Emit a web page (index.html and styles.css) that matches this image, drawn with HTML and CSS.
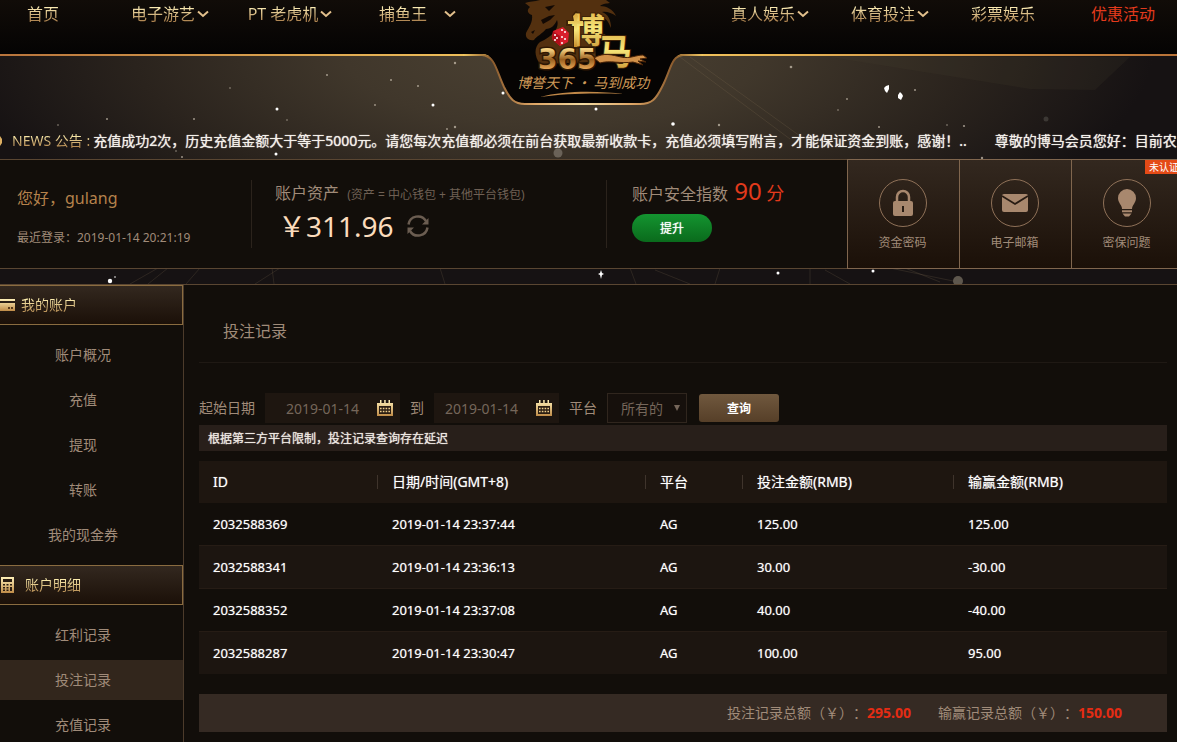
FILE: index.html
```
<!DOCTYPE html>
<html lang="zh-CN">
<head>
  <meta charset="UTF-8" />
  <meta name="viewport" content="width=device-width, initial-scale=1.0" />
  <title>博马365 - 投注记录</title>
  <link rel="stylesheet" href="styles.css">
</head>
<body>
  <div class="hero">
    <!-- 星空背景 -->
    <svg class="stars" width="1177" height="284" viewBox="0 0 1177 284" aria-hidden="true">
      <g stroke="#8a7658" stroke-opacity=".2">
        <path d="M680 57 L790 139 M690 57 L800 136 M130 284 L158 268 M148 284 L168 268 M186 284 L200 268 M255 284 L280 268 M274 284 L272 268 M445 284 L440 268 M636 284 L630 268 M655 270 L690 284 M715 284 L720 268 M810 284 V268 M825 270 L850 284 M890 268 L958 282 M905 268 L940 282" fill="none"/>
      </g>
      <path d="M830 57 H1130 L1095 90 L1030 89 Z" fill="#4a4234" opacity=".16"/>
      <g fill="#fff">
        <circle cx="277" cy="109" r="1.5"/><circle cx="433" cy="105" r="1.5"/><circle cx="276" cy="154" r="1.5"/>
        <circle cx="503" cy="93" r="1.5"/><circle cx="596" cy="109" r="1.5"/><circle cx="673" cy="124" r="1.8"/>
        <circle cx="110" cy="281" r="2.2"/><circle cx="115" cy="277" r=".8"/><circle cx="778" cy="273" r="1.5"/>
        <circle cx="873" cy="271" r="1.5"/>
        <path d="M884 88 l2 -2 3 -1 v4 l-2 4 -2 -2z M898 95 l2 -3 2 2 1 2 -2 4 -3 -2z M601 270 l1 3 2 1 -2 1 -1 4 -1 -4 -2 -1 2 -1z"/>
      </g>
      <g fill="#cfc4b4" opacity=".7">
        <circle cx="327" cy="75" r="1"/><circle cx="455" cy="63" r="1.2"/><circle cx="391" cy="80" r="1"/>
        <circle cx="418" cy="86" r="1"/><circle cx="230" cy="88" r=".8"/><circle cx="375" cy="105" r=".9"/>
        <circle cx="107" cy="119" r="1"/><circle cx="194" cy="119" r="1"/><circle cx="287" cy="120" r=".8"/>
        <circle cx="455" cy="127" r="1.2"/><circle cx="447" cy="129" r=".9"/><circle cx="182" cy="157" r="1"/>
        <circle cx="176" cy="151" r=".8"/><circle cx="58" cy="125" r=".8"/><circle cx="301" cy="133" r="1"/>
        <circle cx="791" cy="67" r="1.3"/><circle cx="719" cy="125" r="1.2"/><circle cx="847" cy="99" r=".9"/>
        <circle cx="838" cy="110" r=".8"/><circle cx="915" cy="90" r="1"/><circle cx="879" cy="127" r="1"/>
        <circle cx="947" cy="125" r=".8"/><circle cx="964" cy="126" r="1.1"/><circle cx="982" cy="158" r="1.2"/>
      </g>
      <circle cx="1046" cy="119" r="2.5" fill="#3c3834"/>
      <circle cx="558" cy="153" r="4.5" fill="#6a6258"/>
      <circle cx="958" cy="281" r="5" fill="#5e574d"/>
    </svg>

    <header class="header">
      <nav class="nav">
        <a class="nav-item" href="#"><span class="nav-text">首页</span></a>
        <a class="nav-item" href="#"><span class="nav-text">电子游艺</span><svg class="arrow" viewBox="0 0 12 8"><path d="M1 1.500 6 6l5-4.500"/></svg></a>
        <a class="nav-item" href="#"><span class="nav-text">PT 老虎机</span><svg class="arrow" viewBox="0 0 12 8"><path d="M1 1.500 6 6l5-4.500"/></svg></a>
        <a class="nav-item" href="#"><span class="nav-text">捕鱼王</span><svg class="arrow arrow-far" viewBox="0 0 12 8"><path d="M1 1.500 6 6l5-4.500"/></svg></a>
        <a class="logo" href="#" aria-label="博马365">
          <svg width="240" height="108" viewBox="463 0 240 108">
            <defs>
              <linearGradient id="gold" x1="0" y1="0" x2="0" y2="1">
                <stop offset="0" stop-color="#d9a53a"/>
                <stop offset=".5" stop-color="#f7e77a"/>
                <stop offset="1" stop-color="#c98d2c"/>
              </linearGradient>
              <linearGradient id="bronze" x1="0" y1="0" x2="0" y2="1">
                <stop offset=".2" stop-color="#f4d080"/>
                <stop offset=".5" stop-color="#9a6020"/>
                <stop offset=".8" stop-color="#e8a858"/>
              </linearGradient>
              <linearGradient id="rim" x1="0" y1="0" x2="1" y2="0">
                <stop offset="0" stop-color="#f2c862"/>
                <stop offset=".12" stop-color="#8a5a2c"/>
                <stop offset=".3" stop-color="#e0a868"/>
                <stop offset=".5" stop-color="#f2d9a0"/>
                <stop offset=".7" stop-color="#e0a868"/>
                <stop offset=".88" stop-color="#8a5a2c"/>
                <stop offset="1" stop-color="#f2c862"/>
              </linearGradient>
            </defs>
            <path d="M463 52 H703 V54 H683 C671 55 671 70 662 86 C656 99 652 103 640 103.500 H525 C513 103 509 98 504 86 C496 69 495 55 483 54 H463Z" fill="#060403"/>
            <path d="M463 55 H482 C495 56 496 70 504 87 C510 99 514 104 525 104 H640 C652 104 656 99 662 87 C671 70 671 56 683 55 H703" fill="none" stroke="url(#rim)" stroke-width="2"/>
            <!-- 马头 -->
            <path d="M540 0 C534 2 530 1 525 3 L530 7 C526 10 528 14 532 15 C533 22 529 27 526 33 C525 38 529 41 534 40 C537 36 542 34 546 29 C551 29 555 25 557 20 C560 28 552 37 540 42 C534 47 534 56 540 64 L596 62 L594 20 L604 18 C608 20 610 26 611 28 C611 20 608 14 602 12 C606 11 612 13 616 16 C613 9 606 6 600 6 C604 3 606 4 610 3 L606 0Z" fill="#53300f"/>
            <path d="M541 20 l8-4 6 -1 -5 5 -7 4z M545 7 l10 -2 -6 6z M531 32 l4 -2 -2 4z" fill="#120904"/>
            <path d="M576 12 l3 4 -1 5 h7 v4 h-7 V48 h-4 V25 h-7 v-4 h7 l-1 -5z" fill="#3d2208" stroke="#3d2208" stroke-width="2"/>
            <text x="571" y="43" class="logo-bo">博</text>
            <path d="M576 13 l2 3 -1 5 h6 v3 h-6 V47 h-3 V24 h-6 v-3 h6 l-1 -5z" fill="url(#gold)"/>
            <text x="598" y="64" class="logo-ma">马</text>
            <text x="538" y="69" class="logo-num">365</text>
            <path d="M594 58 C604 52 612 55 621 57 C630 59 636 55 643 55 L647 58 L640 59 L646 62 L638 61 L643 65 L633 62 C620 64 610 60 600 63z" fill="#d19149" stroke="#4b2407"/>
            <!-- 骰子 -->
            <path d="M553 31 L563 27 L569 33 L568 42 L560 46 L552 39Z" fill="#d81e2c"/>
            <path d="M553 31 L560 36 L560 46 L552 39Z" fill="#b00e1a"/>
            <g fill="#fff"><circle cx="562" cy="30" r="1"/><circle cx="565" cy="32" r="1"/><circle cx="562" cy="37" r="1"/><circle cx="565" cy="39" r="1"/><circle cx="562" cy="43" r="1"/><circle cx="555" cy="35" r="1"/><circle cx="557" cy="38" r="1"/><circle cx="555" cy="40" r="1"/></g>
            <text x="517" y="88" class="logo-slogan">博誉天下 · 马到成功</text>
            <path d="M540 97 C565 90 600 91 624 94 C600 93 565 93 540 97" fill="#c08848"/>
          </svg>
        </a>
        <a class="nav-item" href="#"><span class="nav-text">真人娱乐</span><svg class="arrow" viewBox="0 0 12 8"><path d="M1 1.500 6 6l5-4.500"/></svg></a>
        <a class="nav-item" href="#"><span class="nav-text">体育投注</span><svg class="arrow" viewBox="0 0 12 8"><path d="M1 1.500 6 6l5-4.500"/></svg></a>
        <a class="nav-item" href="#"><span class="nav-text">彩票娱乐</span></a>
        <a class="nav-item hot" href="#"><span class="nav-text">优惠活动</span></a>
      </nav>
    </header>

    <!-- 公告 -->
    <div class="news">
      <svg class="news-icon" width="16" height="14" viewBox="0 0 16 14"><path d="M0 4h5l6-4v14l-6-4H0z M12 2h2l2 3v4l-2 3h-2z" fill="#dcae62"/></svg>
      <span class="news-label">NEWS 公告 :</span>
      <div class="news-list">
        <span>充值成功2次，历史充值金额大于等于5000元。请您每次充值都必须在前台获取最新收款卡，充值必须填写附言，才能保证资金到账，感谢！..</span>
        <span>尊敬的博马会员您好：目前农</span>
      </div>
    </div>

    <!-- 账户信息 -->
    <section class="account">
      <div class="user">
        <div class="user-name">您好，gulang</div>
        <div class="user-login">最近登录：2019-01-14 20:21:19</div>
      </div>
      <div class="assets">
        <div class="info-title">账户资产 <small>(资产 = 中心钱包 + 其他平台钱包)</small></div>
        <div class="balance">
          <span>￥311.96</span>
          <button class="refresh" aria-label="刷新">
            <svg width="24" height="24" viewBox="0 0 24 24"><g fill="none" stroke="#6b5d51" stroke-width="2.500"><path d="M2.500 10.500A9.500 9.500 0 0 1 20 7"/><path d="M21.500 13.500A9.500 9.500 0 0 1 4 17"/></g><path d="M22.500 4v6.500H16z M1.500 20v-6.500H8z" fill="#6b5d51"/></svg>
          </button>
        </div>
      </div>
      <div class="security">
        <div class="info-title">账户安全指数 <span class="score"><b>90</b> 分</span></div>
        <button class="upgrade">提升</button>
      </div>
      <div class="tiles">
        <a class="tile" href="#">
          <span class="tile-icon"><svg width="22" height="28" viewBox="0 0 22 28"><path d="M5 12V8a6 6 0 0 1 12 0v4" fill="none" stroke="#a8886e" stroke-width="2.500"/><rect x="1" y="12" width="20" height="15" rx="2" fill="#a8886e"/><path d="M11 17v6" stroke="#281c13" stroke-width="2"/></svg></span>
          <span>资金密码</span>
        </a>
        <a class="tile" href="#">
          <span class="tile-icon"><svg width="26" height="20" viewBox="0 0 26 20"><rect y="1" width="26" height="18" rx="2" fill="#a8886e"/><path d="M0 3l13 8 13-8" fill="none" stroke="#281c13" stroke-width="1.800"/></svg></span>
          <span>电子邮箱</span>
        </a>
        <a class="tile" href="#">
          <span class="tile-icon"><svg width="20" height="28" viewBox="0 0 20 28"><path d="M10 0a9 9 0 0 0-9 9c0 5 4 7 4 11h10c0-4 4-6 4-11a9 9 0 0 0-9-9z M5 21.300h10v2H5z M5.500 24.500h9L12 27.500H8z" fill="#a8886e"/></svg></span>
          <span>密保问题</span>
          <span class="badge">未认证</span>
        </a>
      </div>
    </section>
  </div>

  <div class="page">
    <aside class="sidebar">
      <h3 class="side-title">
        <svg width="20" height="12" viewBox="0 0 20 12"><defs><linearGradient id="icon" x1="0" y1="0" x2="0" y2="1"><stop offset="0" stop-color="#fff0b8"/><stop offset="1" stop-color="#c08c48"/></linearGradient></defs><path d="M0 0h20v2H0z M0 4h20v8H0z" fill="url(#icon)"/><path d="M13 8h2v2h-2z M16 8h2v2h-2z" fill="#5a3b1a"/></svg>
        <span>我的账户</span>
      </h3>
      <ul class="side-menu">
        <li><a href="#">账户概况</a></li>
        <li><a href="#">充值</a></li>
        <li><a href="#">提现</a></li>
        <li><a href="#">转账</a></li>
        <li><a href="#">我的现金券</a></li>
      </ul>
      <h3 class="side-title side-detail">
        <svg width="14" height="16" viewBox="0 0 14 16"><path d="M1 0h13v16H1z" fill="url(#icon)"/><path d="M3 2h9v3H3z M3 7h2v1.500H3z M6.500 7h2v1.500h-2z M10 7h2v1.500h-2z M3 10h2v1.500H3z M6.500 10h2v1.500h-2z M10 10h2v4h-2z M3 12.500h2V14H3z M6.500 12.500h2V14h-2z" fill="#2a1d12"/></svg>
        <span>账户明细</span>
      </h3>
      <ul class="side-menu">
        <li><a href="#">红利记录</a></li>
        <li><a class="active" href="#">投注记录</a></li>
        <li><a href="#">充值记录</a></li>
      </ul>
    </aside>

    <main class="content">
      <h2 class="content-title">投注记录</h2>

      <form class="filter">
        <label for="startDate">起始日期</label>
        <div class="date date-start">
          <input type="text" id="startDate" value="2019-01-14">
          <svg width="18" height="16" viewBox="0 0 18 16"><path d="M1 3h16v13H1z M4 0h1.500v5H4z M8.200 0h1.500v5H8.200z M12.500 0H14v5h-1.500z" fill="url(#icon)"/><path d="M3 6h12v8H3z" fill="#2a1d12"/><path d="M4 8.500h10 M4 11.500h10" stroke="#f0cf8d" stroke-width="1.500" stroke-dasharray="1.600 1.200"/></svg>
        </div>
        <label for="endDate">到</label>
        <div class="date">
          <input type="text" id="endDate" value="2019-01-14">
          <svg width="18" height="16" viewBox="0 0 18 16"><path d="M1 3h16v13H1z M4 0h1.500v5H4z M8.200 0h1.500v5H8.200z M12.500 0H14v5h-1.500z" fill="url(#icon)"/><path d="M3 6h12v8H3z" fill="#2a1d12"/><path d="M4 8.500h10 M4 11.500h10" stroke="#f0cf8d" stroke-width="1.500" stroke-dasharray="1.600 1.200"/></svg>
        </div>
        <label for="platform">平台</label>
        <div class="select">
          <select id="platform"><option>所有的</option></select>
          <svg width="6" height="6" viewBox="0 0 6 6"><path d="M0 0h6L3 6z" fill="#75665a"/></svg>
        </div>
        <button class="search" type="button">查询</button>
      </form>

      <p class="notice">根据第三方平台限制，投注记录查询存在延迟</p>

      <table class="records">
        <colgroup>
          <col class="col-id"><col class="col-date"><col class="col-platform"><col class="col-bet"><col>
        </colgroup>
        <thead>
          <tr><th>ID</th><th>日期/时间(GMT+8)</th><th>平台</th><th>投注金额(RMB)</th><th>输赢金额(RMB)</th></tr>
        </thead>
        <tbody>
          <tr><td>2032588369</td><td>2019-01-14 23:37:44</td><td>AG</td><td>125.00</td><td>125.00</td></tr>
          <tr><td>2032588341</td><td>2019-01-14 23:36:13</td><td>AG</td><td>30.00</td><td>-30.00</td></tr>
          <tr><td>2032588352</td><td>2019-01-14 23:37:08</td><td>AG</td><td>40.00</td><td>-40.00</td></tr>
          <tr><td>2032588287</td><td>2019-01-14 23:30:47</td><td>AG</td><td>100.00</td><td>95.00</td></tr>
        </tbody>
      </table>

      <div class="total">
        <span>投注记录总额（￥）：<b>295.00</b></span>
        <span>输赢记录总额（￥）：<b>150.00</b></span>
      </div>
    </main>
  </div>
</body>
</html>
```

FILE: styles.css
```
* {
  box-sizing: border-box;
}

body {
  margin: 0;
  background-color: #120e0a;
  color: #a08b79;
  font-family: "Noto Sans", "Noto Sans CJK SC", sans-serif;
  font-size: 14px;
  line-height: 20px;
  text-spacing-trim: space-all;
  overflow: hidden;
}

a {
  color: inherit;
  text-decoration: none;
}

button, input, select {
  font-family: inherit;
  font-size: 14px;
}

button {
  border: none;
  padding: 0;
  cursor: pointer;
}

svg {
  display: block;
  flex: none;
}

.hero {
  position: relative;
  padding-bottom: 15px;
  border-bottom: 1px solid #5a4632;
  background: radial-gradient(ellipse 600px 220px at 47% 50px, #4c4233 0%, #40372b 35%, #2a231d 70%, #161213 100%);
  background-color: #161213;
}

.stars {
  position: absolute;
  top: 0;
  left: 0;
}

/* 顶部导航 */
.header {
  position: relative;
  height: 56px;
  background:
    linear-gradient(90deg, #b8743c, #f2c45c 42%, #f2c45c 58%, #b87238) bottom / 100% 2px no-repeat,
    linear-gradient(#110c08, #040303);
}

.nav {
  display: flex;
  margin: 0 -6px 0 -17px;
}

.nav-item {
  flex: 1;
  display: grid;
  grid-template-columns: 1fr auto 1fr;
  align-items: center;
  column-gap: 2px;
  height: 28px;
  font-size: 16px;
  line-height: 24px;
  white-space: nowrap;
}

.nav-text {
  grid-column: 2;
  background: linear-gradient(#fff0b8 20%, #a87b48 85%);
  background-clip: text;
  -webkit-background-clip: text;
  color: transparent;
}

.hot .nav-text {
  background: none;
  color: #e23a1c;
}

.arrow {
  width: 12px;
  height: 8px;
  fill: none;
  stroke: #e2c08c;
  stroke-width: 2;
}

.arrow-far {
  margin-left: 15px;
}

.logo {
  flex: 2;
  height: 56px;
  display: flex;
  justify-content: center;
}

.logo-bo, .logo-ma {
  font-family: "Noto Sans CJK SC", sans-serif;
  font-size: 34px;
  font-weight: bold;
  fill: url(#gold);
  stroke: #3d2208;
  stroke-width: 2px;
  paint-order: stroke;
}

.logo-num {
  font-family: "DejaVu Sans", sans-serif;
  font-size: 28px;
  font-weight: bold;
  fill: url(#bronze);
  stroke: #2f1803;
  stroke-width: 3px;
  paint-order: stroke;
}

.logo-slogan {
  font-family: "Noto Sans CJK SC", sans-serif;
  font-size: 14px;
  font-style: italic;
  fill: #cf9a58;
}

/* 公告 */
.news {
  position: relative;
  display: flex;
  align-items: center;
  height: 103px;
  padding-top: 67px;
  margin-left: -14px;
  overflow: hidden;
  white-space: nowrap;
}

.news-icon {
  margin-right: 10px;
}

.news-label {
  background: linear-gradient(#fff0b0 20%, #a87840 90%);
  background-clip: text;
  -webkit-background-clip: text;
  color: transparent;
}

.news-list {
  display: flex;
  gap: 28px;
  margin-left: 3px;
  color: #f4f0ea;
  text-shadow: 0 0 1px #f4f0ea;
}

/* 账户信息 */
.account {
  position: relative;
  display: flex;
  height: 110px;
  margin: 0 -6px 0 -17px;
  border-top: 1px solid #5a4632;
  border-bottom: 1px solid #5a4632;
  background-color: #120e0a;
  white-space: nowrap;
}

.user, .assets {
  background: linear-gradient(#2b231c, #2b231c) right 20px / 1px 68px no-repeat;
}

.user {
  width: 269px;
  padding: 28px 0 0 34px;
}

.user-name {
  color: #b5824c;
  font-size: 16px;
}

.user-login {
  margin-top: 20px;
  font-size: 12px;
}

.assets {
  width: 355px;
  padding: 22px 0 0 23px;
}

.info-title {
  height: 22px;
  font-size: 16px;
  line-height: 22px;
}

.info-title small {
  margin-left: 4px;
  font-size: 12px;
  color: #6f6054;
}

.balance {
  display: flex;
  align-items: center;
  gap: 12px;
  padding-left: 3px;
  height: 44px;
  color: #fbdcbc;
  font-size: 28px;
}

.refresh {
  background: none;
}

.security {
  flex: 1;
  padding: 20px 0 0 25px;
}

.score {
  margin-left: 2px;
  color: #e23a1c;
  font-size: 18px;
}

.score b {
  font-size: 24px;
  font-weight: normal;
}

.upgrade {
  display: block;
  width: 80px;
  height: 28px;
  margin-top: 12px;
  border-radius: 14px;
  background: linear-gradient(#149430, #0a6a1c);
  color: #fff;
  font-size: 12px;
  text-shadow: 0 0 1px #fff;
}

.tiles {
  display: flex;
  height: 110px;
  margin: -1px 0;
}

.tile {
  position: relative;
  display: flex;
  flex-direction: column;
  align-items: center;
  gap: 6px;
  width: 112px;
  padding: 19px 2px 0 0;
  border: 1px solid #80664e;
  border-right: none;
  background: linear-gradient(#33281f, #1b1008);
  font-size: 12px;
}

.tile-icon {
  display: flex;
  align-items: center;
  justify-content: center;
  width: 48px;
  height: 48px;
  border: 1px solid #8f7158;
  border-radius: 50%;
}

.badge {
  position: absolute;
  top: 0;
  right: 0;
  padding: 0 4px;
  background-color: #e44a16;
  color: #fff;
  font-size: 10px;
  line-height: 14px;
}

/* 主体 */
.page {
  display: flex;
  margin: 0 -6px 0 -17px;
}

.sidebar {
  width: 201px;
  border-right: 1px solid #4c3b2b;
}

.side-title {
  display: flex;
  align-items: center;
  gap: 6px;
  height: 40px;
  margin: 0;
  padding-left: 11px;
  border: 1px solid #8a6c40;
  background: linear-gradient(#33281f, #1b1008);
  font-size: 14px;
  font-weight: normal;
}

.side-title span {
  background: linear-gradient(#fff0b0 20%, #b58a50 90%);
  background-clip: text;
  -webkit-background-clip: text;
  color: transparent;
}

.side-detail {
  gap: 11px;
  padding-left: 16px;
}

.side-menu {
  display: flex;
  flex-direction: column;
  gap: 5px;
  margin: 0;
  padding: 10px 0;
  list-style: none;
  text-align: center;
}

.side-menu a {
  display: block;
  line-height: 40px;
}

.side-menu .active {
  background-color: #32261c;
}

.content {
  flex: 1;
  padding: 0 16px 10px 15px;
}

.content-title {
  height: 78px;
  margin: 0;
  padding: 34px 24px 0;
  border-bottom: 1px solid #1f1914;
  font-size: 16px;
  line-height: 24px;
  font-weight: normal;
}

.filter {
  display: flex;
  align-items: center;
  gap: 10px;
  margin-top: 30px;
  height: 30px;
  white-space: nowrap;
}

.date {
  display: flex;
  align-items: center;
  width: 125px;
  height: 30px;
  padding: 0 6px 0 11px;
  background-color: #1e1610;
}

.date-start {
  width: 135px;
  padding-left: 21px;
}

.date input {
  flex: 1;
  min-width: 0;
  padding: 0;
  border: none;
  background: none;
  color: #75665a;
}

.select {
  position: relative;
  width: 80px;
}

.select select {
  width: 100%;
  height: 30px;
  padding: 0 13px;
  border: 1px solid #30261e;
  border-radius: 0;
  background-color: #16100c;
  color: #75665a;
  appearance: none;
}

.select svg {
  position: absolute;
  top: 12px;
  right: 7px;
}

.search {
  width: 80px;
  height: 28px;
  margin-left: 2px;
  border-radius: 3px;
  background: linear-gradient(#70583e, #563f28);
  color: #fff;
  font-size: 12px;
  font-weight: bold;
}

.notice {
  margin: 2px 0 10px;
  padding: 1px 9px 0;
  background-color: #281f1a;
  color: #eee8e2;
  font-size: 12px;
  line-height: 25px;
  text-shadow: 0 0 1px #eee8e2;
}

/* 投注记录表 */
.records {
  width: 100%;
  table-layout: fixed;
  border-collapse: separate;
  border-spacing: 0;
  color: #fff;
  text-align: left;
  text-shadow: 0 0 1px rgba(255, 255, 255, 0.6);
}

.col-id { width: 179px; }
.col-date { width: 268px; }
.col-platform { width: 97px; }
.col-bet { width: 211px; }

.records th {
  height: 42px;
  padding: 0 14px;
  background: linear-gradient(#3f342c, #3f342c) right center / 1px 14px no-repeat #1e1610;
  font-weight: normal;
}

.records th:last-child {
  background: #1e1610;
}

.records td {
  height: 43px;
  padding: 0 14px;
  border-bottom: 1px solid #261c15;
  font-size: 13px;
}

.records tr:nth-child(even) td {
  background-color: #1c1510;
}

.records tr:last-child td {
  height: 42px;
  border-bottom: none;
}

.total {
  display: flex;
  justify-content: flex-end;
  gap: 27px;
  margin-top: 20px;
  padding: 9px 45px;
  background-color: #352a23;
}

.total b {
  color: #e42c14;
}
```
